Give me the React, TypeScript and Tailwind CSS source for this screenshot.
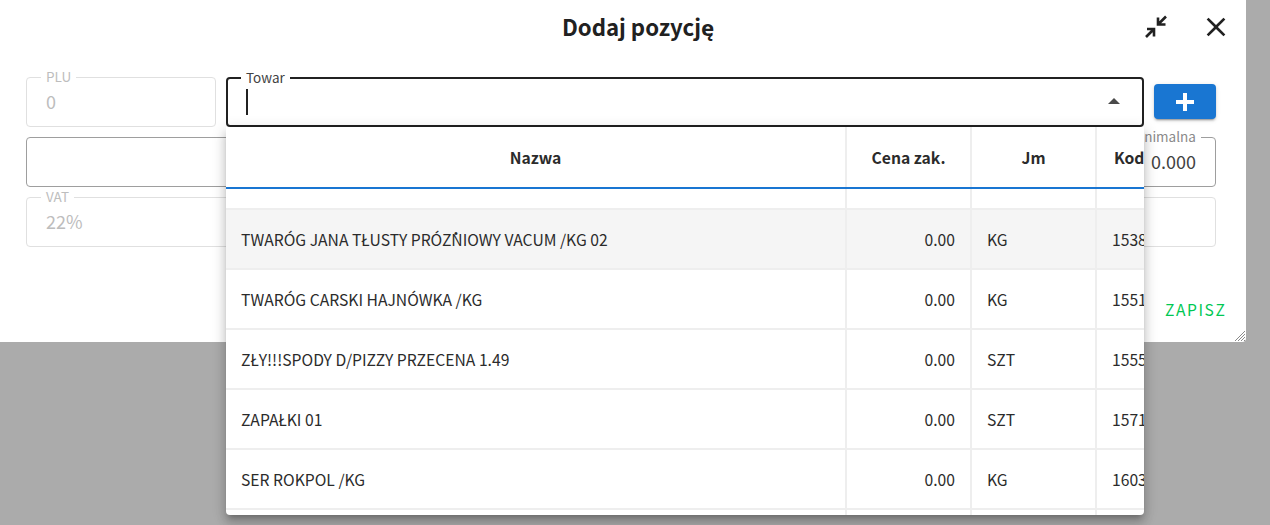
const FONT = "font-['Noto_Sans_CJK_SC','Noto_Sans',sans-serif]";

const ROWS = [
  { name: "TWARÓG JANA TŁUSTY PRÓŻNIOWY VACUM /KG 02", jm: "KG", kod: "1538", hover: true },
  { name: "TWARÓG CARSKI HAJNÓWKA /KG", jm: "KG", kod: "1551" },
  { name: "ZŁY!!!SPODY D/PIZZY PRZECENA 1.49", jm: "SZT", kod: "1555" },
  { name: "ZAPAŁKI 01", jm: "SZT", kod: "1571" },
  { name: "SER ROKPOL /KG", jm: "KG", kod: "1603" },
];

function Field({
  label,
  value,
  className,
  border = "border-[#e0e0e0]",
  text = "text-[#bdbdbd]",
  alignRight = false,
}: {
  label?: string;
  value?: string;
  className?: string;
  border?: string;
  text?: string;
  alignRight?: boolean;
}) {
  return (
    <fieldset className={`h-[55px] rounded border px-[14px] ${border} ${className ?? ""}`}>
      {label ? (
        <legend className={`-translate-y-px whitespace-nowrap px-[5px] text-[13.5px] leading-[11px] ${text}`}>{label}</legend>
      ) : (
        <legend className="h-[11px] p-0" />
      )}
      <div
        className={`mt-[5px] px-[5px] text-[18px] leading-[26px] ${alignRight ? "text-right text-[#424242]" : text}`}
      >
        {value}
      </div>
    </fieldset>
  );
}

function Cell({ w, className, children }: { w: string; className?: string; children?: React.ReactNode }) {
  return (
    <div className={`flex h-full shrink-0 items-center border-r-2 border-[#eeeeee] px-[15px] pt-[2px] ${w} ${className ?? ""}`}>
      {children}
    </div>
  );
}

function TowarDropdown() {
  return (
    <div className="absolute left-[200px] top-[55px] z-10 h-[388px] w-[918px] overflow-hidden rounded-b bg-white text-[15.7px] text-[#2b2b2b] shadow-[0_5px_5px_-3px_rgba(0,0,0,0.2),0_8px_10px_1px_rgba(0,0,0,0.14),0_3px_14px_2px_rgba(0,0,0,0.12)]">
      <div className="flex h-[62px] w-[1000px] border-b-2 border-[#1976d2] font-bold">
        <Cell w="w-[621px]" className="justify-center">Nazwa</Cell>
        <Cell w="w-[125px]" className="justify-center">Cena zak.</Cell>
        <Cell w="w-[125px]" className="justify-center">Jm</Cell>
        <Cell w="w-[129px]" className="justify-start border-r-0 pl-[17px]">Kod</Cell>
      </div>
      <div className="flex h-[21px] w-[1000px] border-b-2 border-[#eeeeee]">
        <Cell w="w-[621px]" />
        <Cell w="w-[125px]" />
        <Cell w="w-[125px]" />
      </div>
      {ROWS.map((r) => (
        <div
          key={r.kod}
          className={`flex h-[60px] w-[1000px] border-b-2 border-[#eeeeee] ${r.hover ? "bg-[#f5f5f5]" : ""}`}
        >
          <Cell w="w-[621px]">{r.name}</Cell>
          <Cell w="w-[125px]" className="justify-end">0.00</Cell>
          <Cell w="w-[125px]">{r.jm}</Cell>
          <Cell w="w-[129px]" className="border-r-0">{r.kod}</Cell>
        </div>
      ))}
      <div className="flex h-[10px] w-[1000px]">
        <Cell w="w-[621px]" />
        <Cell w="w-[125px]" />
        <Cell w="w-[125px]" />
      </div>
    </div>
  );
}

export default function App() {
  return (
    <div className={`h-[525px] w-[1270px] overflow-hidden bg-[#ababab] ${FONT}`}>
      <div className="relative h-[342px] w-[1246px] rounded-br bg-white">
        {/* title bar */}
        <div className="relative flex h-[56px] items-center justify-center">
          <h2 className="mb-[4px] ml-[30px] text-[22.2px] font-bold leading-none text-[#212121]">Dodaj pozycję</h2>
          <svg className="absolute left-[1145px] top-[15px] h-[24px] w-[24px]" viewBox="0 0 24 24" fill="none" stroke="#212121" strokeWidth="2.6">
            <path d="M13 2.5V9.5H20.5M13 9.5 21 1.5" />
            <path d="M2 14H9V21.5M9 14 1 22" />
          </svg>
          <svg className="absolute left-[1200px] top-[11px] h-[32px] w-[32px]" viewBox="0 0 24 24" fill="#212121">
            <path d="M19 6.41 17.59 5 12 10.59 6.41 5 5 6.41 10.59 12 5 17.59 6.41 19 12 13.41 17.59 19 19 17.59 13.41 12z" />
          </svg>
        </div>

        {/* form */}
        <div className="relative mx-[26px] mt-[16px] flex w-[1190px] flex-col gap-[5px]">
          <div className="flex gap-[10px]">
            <Field label="PLU" value="0" className="w-[190px] shrink-0" />
            <fieldset className="h-[55px] w-[918px] shrink-0 rounded border-2 border-[#212121] pl-[13px] pr-[22px]">
              <legend className="-translate-y-px px-[5px] text-[13.5px] leading-[12px] text-[#424242]">Towar</legend>
              <div className="mt-[5px] flex h-[26px] items-center justify-between pl-[5px]">
                <div className="h-[26px] w-[2px] bg-[#212121]" />
                <div className="-mt-[2px] h-0 w-0 border-x-[6px] border-b-[6px] border-x-transparent border-b-[#4a4a4a]" />
              </div>
            </fieldset>
            <button className="mt-[12px] flex h-[35px] w-[62px] items-center justify-center rounded bg-[#1976d2] shadow-[0_3px_1px_-2px_rgba(0,0,0,0.2),0_2px_2px_0_rgba(0,0,0,0.14),0_1px_5px_0_rgba(0,0,0,0.12)]">
              <svg className="h-[18px] w-[18px]" viewBox="0 0 18 18" fill="white">
                <path d="M7 0h4v7h7v4h-7v7H7v-7H0V7h7z" />
              </svg>
            </button>
          </div>
          <div className="flex gap-[10px]">
            <Field className="w-[1037px] shrink-0" border="border-[#9e9e9e]" />
            <Field
              label="Cena minimalna"
              value="0.000"
              alignRight
              className="w-[143px] shrink-0"
              border="border-[#9e9e9e]"
              text="text-[#8a8a8a]"
            />
          </div>
          <div className="flex">
            <Field label="VAT" value="22%" className="w-full" />
          </div>
          <TowarDropdown />
        </div>

        <div className="absolute left-[1165px] top-[299px] text-[15.6px] leading-[20px] tracking-[1.6px] text-[#00c853]">
          ZAPISZ
        </div>

        {/* resize handle */}
        <svg className="absolute bottom-0 right-0 h-[12px] w-[12px]" viewBox="0 0 12 12" stroke="#8a8a8a" strokeWidth="1">
          <path d="M1 11 11 1M4 11l7-7M7 11l4-4M10 11l1-1" />
        </svg>
      </div>
    </div>
  );
}
